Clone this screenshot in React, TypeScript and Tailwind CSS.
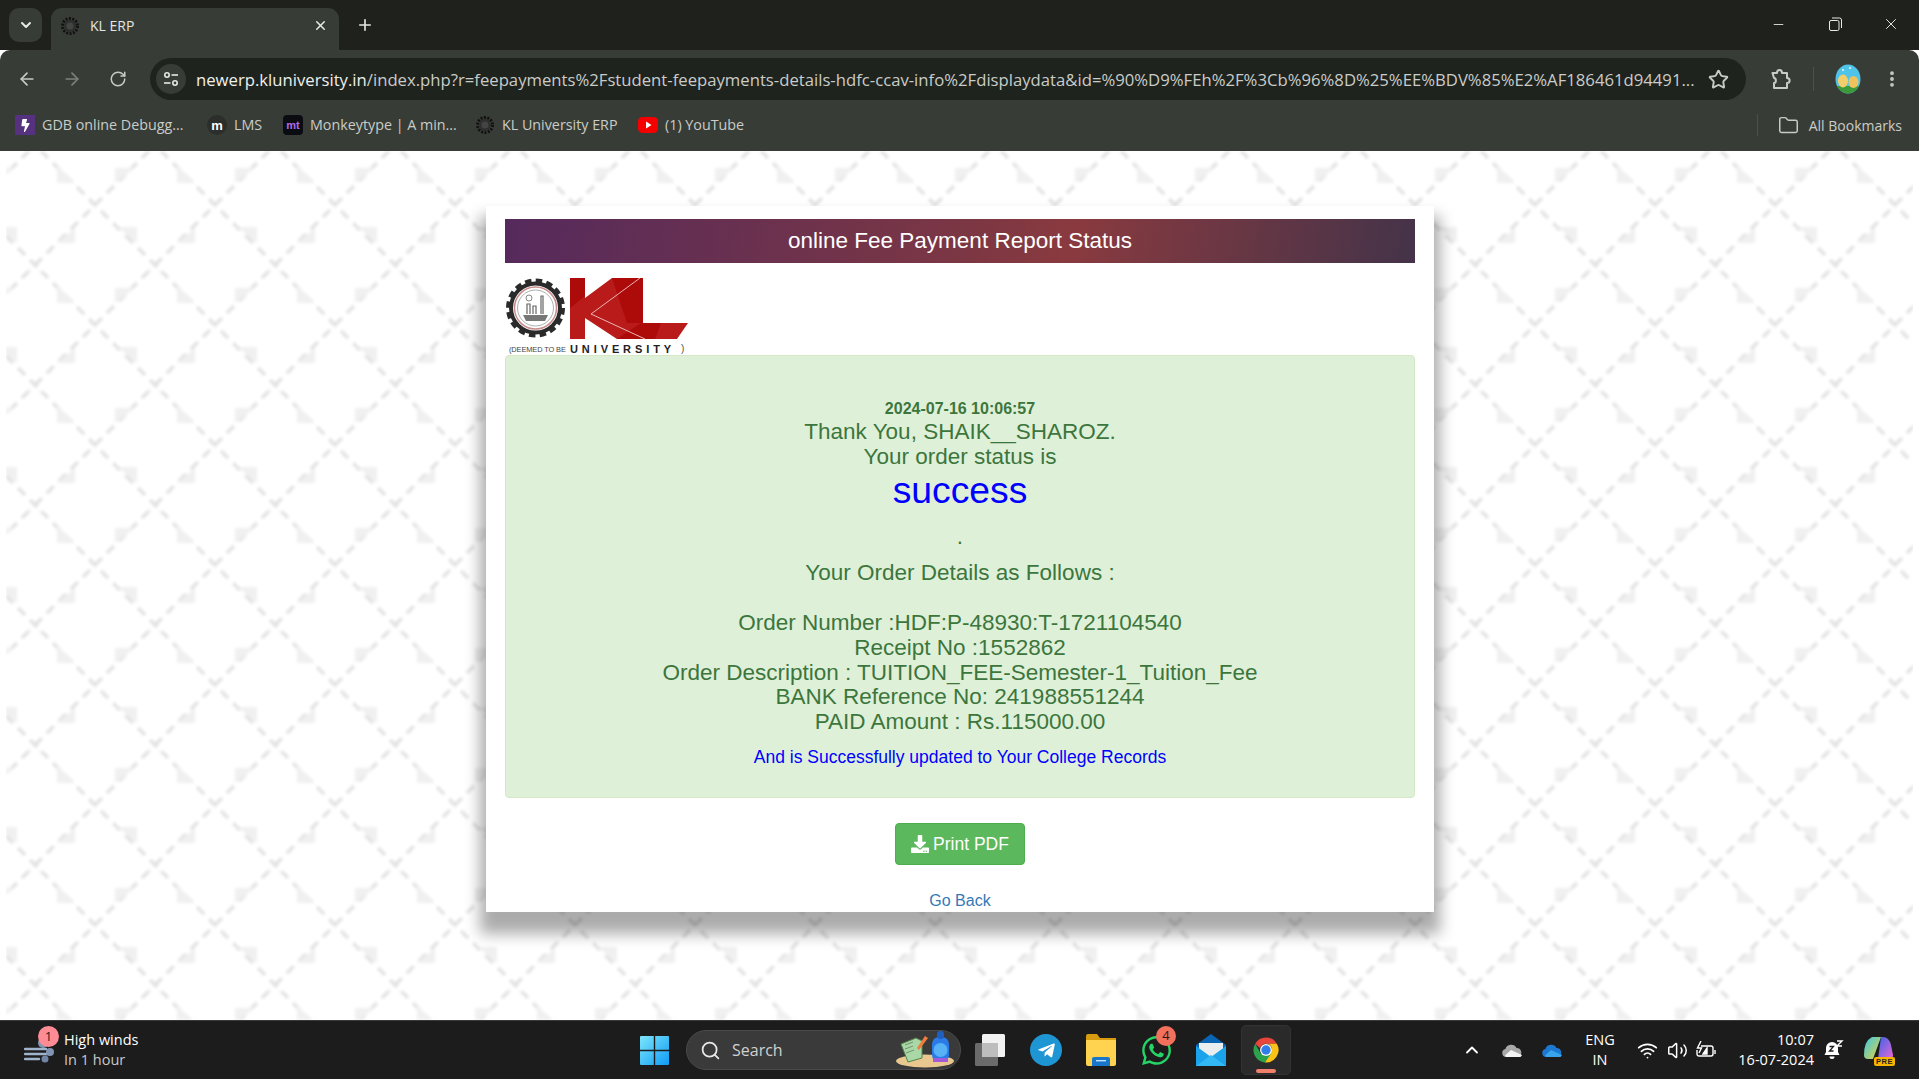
import React from "react";
import { ArrowLeft, ArrowRight, RotateCw, Star, EllipsisVertical, Folder, X, Plus, ChevronDown, Minus, Search, ChevronUp, Wifi, Volume2 } from "lucide-react";
import { FaDownload, FaTelegramPlane, FaWhatsapp, FaBolt } from "react-icons/fa";

const URL_HEAD = "newerp.kluniversity.in";
const URL_TAIL = "/index.php?r=feepayments%2Fstudent-feepayments-details-hdfc-ccav-info%2Fdisplaydata&id=%90%D9%FEh%2F%3Cb%96%8D%25%EE%BDV%85%E2%AF186461d94491...";

function GearDot({ size = 20 }: { size?: number }) {
  return (
    <svg width={size} height={size} viewBox="0 0 20 20" className="shrink-0">
      <circle cx="10" cy="10" r="7.5" fill="none" stroke="#111" strokeWidth="3" strokeDasharray="2 1.4" />
      <circle cx="10" cy="10" r="6" fill="#2c2f2b" />
      <circle cx="10" cy="10" r="3.5" fill="#444" />
    </svg>
  );
}

function Bookmark({ icon, label, gap = "ml-[7px]", width }: { icon: React.ReactNode; label: string; gap?: string; width: string }) {
  return (
    <div className={`flex items-center shrink-0 ${width}`}>
      {icon}
      <span className={`${gap} text-[14.3px] text-[#c9ccc8] whitespace-nowrap`}>{label}</span>
    </div>
  );
}

function TuneIcon() {
  return (
    <svg width="16" height="16" viewBox="0 0 16 16" fill="none" stroke="#e6e8e4" strokeWidth="1.6">
      <circle cx="4" cy="4" r="2.2" />
      <path d="M8.5 4H15" />
      <path d="M1 12h6.5" />
      <circle cx="12" cy="12" r="2.2" />
    </svg>
  );
}

function PuzzleIcon() {
  return (
    <svg width="20" height="22" viewBox="0 0 20 22" fill="none" stroke="#c7cbc5" strokeWidth="2" strokeLinejoin="round">
      <path d="M1.5 5H6c0-4 5-4 5 0h5v5c3.5 0 3.5 5 0 5v5H3v-5c2.5 0 2.5-5 0-5z" />
    </svg>
  );
}

function RestoreIcon() {
  return (
    <svg width="13" height="14" viewBox="0 0 13 14" fill="none" stroke="#e8e8e8" strokeWidth="1">
      <rect x="0.5" y="3.5" width="9.5" height="10" rx="1.5" />
      <path d="M3 1h7.5a2 2 0 0 1 2 2v8" />
    </svg>
  );
}

function Avatar() {
  return (
    <svg width="26" height="30" viewBox="0 0 26 30" className="shrink-0">
      <defs>
        <clipPath id="avatar-clip"><ellipse cx="13" cy="15" rx="12.5" ry="14.5" /></clipPath>
      </defs>
      <g clipPath="url(#avatar-clip)">
        <rect width="26" height="30" fill="#4fc3e8" />
        <rect y="22" width="26" height="8" fill="#3c9a3a" />
        <ellipse cx="8" cy="17" rx="5" ry="6.5" fill="#f3cf6c" />
        <ellipse cx="18.5" cy="18" rx="5" ry="6" fill="#eec25c" />
        <circle cx="8" cy="6" r="0.9" fill="#fff" />
        <circle cx="15" cy="4" r="0.9" fill="#fff" />
      </g>
    </svg>
  );
}

function KlLogo() {
  return (
    <svg width="185" height="77" viewBox="0 0 185 77" className="block">
      <circle cx="30.500" cy="30" r="24.500" fill="none" stroke="#2a2a2a" strokeWidth="4" />
      <circle cx="30.500" cy="30" r="27.500" fill="none" stroke="#2a2a2a" strokeWidth="4" strokeDasharray="6.5 4.300" />
      <circle cx="30.500" cy="30" r="21" fill="#fff" stroke="#c98c8c" strokeWidth="1.500" />
      <circle cx="30.500" cy="30" r="18" fill="#fff" stroke="#999" strokeWidth="0.8" />
      <path d="M18 37h25l-3 6H21z" fill="#777" />
      <path d="M22 36V26h3v10M28 36V28h3v8M36 36V18h2v18" stroke="#666" strokeWidth="1.200" fill="none" />
      <circle cx="24" cy="20" r="3" fill="none" stroke="#888" strokeWidth="1" />
      <path d="M65 0h15v20L107 0h31v45h45l-11 16h-60L80 40v21H65z" fill="#b91a1a" />
      <path d="M107 0h31v45h-16zM112 61h38l6-16h-20zM65 0h15v18L65 30z" fill="#ad0a0a" />
      <path d="M135 0L86 36l54 25" fill="none" stroke="#f2c6c6" strokeWidth="0.9" />
      <text x="4" y="73.500" fontFamily="Liberation Sans, sans-serif" fontSize="7.400" fill="#444" letterSpacing="-0.1">(DEEMED TO BE</text>
      <text x="65" y="75" fontFamily="Liberation Sans, sans-serif" fontSize="11" fontWeight="700" fill="#222" letterSpacing="3.900">UNIVERSITY</text>
      <text x="176" y="74" fontFamily="Liberation Sans, sans-serif" fontSize="10" fill="#555">)</text>
    </svg>
  );
}

function PageBackground() {
  return (
    <div className="absolute inset-y-0 left-[6px] right-[6px] overflow-hidden">
      <svg width="100%" height="100%" className="blur-[1.5px]">
        <defs>
          <pattern id="tile" x="0" y="0" width="120" height="120" patternUnits="userSpaceOnUse">
            <g stroke="#e2e2e2" strokeWidth="3.500" strokeDasharray="10 7" fill="none">
              <path d="M23 0L0 23" />
              <path d="M120 23L23 120" />
              <path d="M120 143L143 120" />
              <path d="M35 0L155 120" />
              <path d="M0 85L35 120" />
            </g>
            <g fill="#f0f0f0">
              <path d="M69 77v15H51z" />
              <path d="M112 76h19v16z" />
              <path d="M-8 76h19v16z" />
              <path d="M51 14v18h18z" />
              <path d="M109 17h20l-20 15z" />
              <path d="M-11 17H9l-20 15z" />
            </g>
          </pattern>
        </defs>
        <rect width="100%" height="100%" fill="#fff" />
        <rect width="100%" height="100%" fill="url(#tile)" />
      </svg>
    </div>
  );
}

function WindIcon() {
  return (
    <svg width="32" height="28" viewBox="0 0 32 28" fill="none" strokeLinecap="round">
      <path d="M1 13h21M1 18h24M1 23h14" stroke="#9fb3cc" strokeWidth="2.400" />
      <circle cx="19" cy="7" r="5" fill="#7f95b3" />
      <circle cx="26" cy="16" r="4" fill="#7f95b3" />
      <circle cx="21" cy="23" r="3.500" fill="#6f86a6" />
    </svg>
  );
}

function WinLogo() {
  return (
    <svg width="29" height="29" viewBox="0 0 29 29">
      <defs>
        <linearGradient id="win-g" x1="0" y1="0" x2="1" y2="1">
          <stop offset="0" stopColor="#7de6fb" />
          <stop offset="1" stopColor="#0f9bf5" />
        </linearGradient>
      </defs>
      <path d="M1 0h12.800v13.800H0V1a1 1 0 0 1 1-1zM15.200 0H28a1 1 0 0 1 1 1v12.800H15.200zM0 15.200h13.800V29H1a1 1 0 0 1-1-1zM15.200 15.200H29V28a1 1 0 0 1-1 1H15.200z" fill="url(#win-g)" />
    </svg>
  );
}

function SearchWidget() {
  return (
    <svg width="60" height="38" viewBox="0 0 60 38">
      <ellipse cx="30" cy="30" rx="29" ry="6.500" fill="#e8c88f" />
      <path d="M6 13l15-6 6 3v17l-14 4z" fill="#a9d7a6" stroke="#52854c" strokeWidth="1" />
      <path d="M10 14l8-3M10 18l8-3M11 22l8-3" stroke="#6c8a68" strokeWidth="0.9" />
      <path d="M22 17L30 5l3 2-9 12z" fill="#ef7d3f" />
      <rect x="37" y="6" width="17" height="25" rx="7" fill="#2a7be8" />
      <rect x="42" y="0" width="7" height="8" rx="3" fill="#1f5fc0" />
      <circle cx="45.500" cy="19" r="7" fill="#57b2f5" />
      <rect x="38" y="27" width="15" height="4" fill="#a15bd8" />
    </svg>
  );
}

function TaskView() {
  return (
    <svg width="30" height="32" viewBox="0 0 30 32">
      <rect x="0" y="9" width="23" height="23" rx="1.500" fill="#6b6b6b" />
      <rect x="7" y="0" width="23" height="23" rx="1.500" fill="#f2f2f2" />
      <rect x="7" y="9" width="16" height="14" fill="#bdbdbd" />
    </svg>
  );
}

function FilesIcon() {
  return (
    <svg width="30" height="32" viewBox="0 0 30 32">
      <path d="M0 2a2 2 0 0 1 2-2h9l3 4h16v6H0z" fill="#d79c10" />
      <path d="M0 6h30v24a2 2 0 0 1-2 2H2a2 2 0 0 1-2-2z" fill="#ffd350" />
      <path d="M6 32v-7a2 2 0 0 1 2-2h14a2 2 0 0 1 2 2v7z" fill="#1976c9" />
      <rect x="10" y="26" width="10" height="1.400" fill="#bde3ff" />
    </svg>
  );
}

function MailIcon() {
  return (
    <svg width="30" height="32" viewBox="0 0 30 32">
      <path d="M15 0l15 11v3H0v-3z" fill="#0a64b4" />
      <path d="M3 9h24v10L15 24 3 19z" fill="#e9edf0" />
      <path d="M0 12l15 11 15-11v20H0z" fill="#1aa2ea" />
      <path d="M0 32l15-11 15 11z" fill="#32b8f4" />
    </svg>
  );
}

function ChromeIcon() {
  return (
    <svg width="30" height="30" viewBox="0 0 48 48">
      <path d="M24 4a20 20 0 0 1 17.300 10H24a10 10 0 0 0-9.600 7.200L6.700 14A20 20 0 0 1 24 4z" fill="#e8453c" />
      <path d="M6.700 14l8.600 15A10 10 0 0 0 24 34l-8.700 8A20 20 0 0 1 6.700 14z" fill="#2ba24c" />
      <path d="M41.300 14A20 20 0 0 1 22 44l8.600-15A10 10 0 0 0 32.700 19 10 10 0 0 0 24 14z" fill="#fbc116" />
      <path d="M15.300 29L24 34l8.700-5L22 44a20 20 0 0 1-6.700-2z" fill="#2ba24c" />
      <circle cx="24" cy="24" r="9.500" fill="#fff" />
      <circle cx="24" cy="24" r="7.500" fill="#2f7ee9" />
    </svg>
  );
}

function CloudIcon({ a, b }: { a: string; b: string }) {
  return (
    <svg width="20" height="14" viewBox="0 0 20 14">
      <path d="M4 14a4 4 0 0 1-.6-7.900A6 6 0 0 1 14.500 5 4.600 4.600 0 0 1 16 14z" fill={a} />
      <path d="M4 14a4 4 0 0 1-1-1.500L9 7l11 5a3 3 0 0 1-4 2z" fill={b} />
    </svg>
  );
}

function BatteryIcon() {
  return (
    <svg width="20" height="18" viewBox="0 0 20 18" fill="none" stroke="#fff" strokeWidth="1.400">
      <path d="M5 5h10a2 2 0 0 1 2 2v6a2 2 0 0 1-2 2H3a2 2 0 0 1-2-2V9" />
      <path d="M19 9v4" />
      <path d="M5 0L1.500 7h4L3 12" />
      <path d="M7 13l4-6v6z" fill="#fff" />
    </svg>
  );
}

function BellIcon() {
  return (
    <svg width="20" height="20" viewBox="0 0 20 20">
      <path d="M8 2a6 6 0 0 0-6 6v4l-1.500 3h15L14 12V8a6 6 0 0 0-6-6z" fill="#fff" />
      <path d="M5.500 16.500a2.500 2.500 0 0 0 5 0z" fill="#fff" />
      <path d="M5.500 6.500h4l-4 4.500h4" fill="none" stroke="#1c1c1c" strokeWidth="1.300" />
      <path d="M13 1h5l-5 5h5" fill="none" stroke="#fff" strokeWidth="1.400" />
    </svg>
  );
}

function CopilotIcon() {
  return (
    <div className="relative w-[30px] h-[30px] shrink-0">
      <svg width="30" height="26" viewBox="0 0 30 26">
        <defs>
          <linearGradient id="cp-a" x1="0" y1="0" x2="1" y2="1">
            <stop offset="0" stopColor="#3bc8e8" />
            <stop offset="1" stopColor="#e6d23c" />
          </linearGradient>
          <linearGradient id="cp-b" x1="0" y1="0" x2="1" y2="1">
            <stop offset="0" stopColor="#3a62e6" />
            <stop offset="1" stopColor="#e86ad8" />
          </linearGradient>
        </defs>
        <path d="M8 2h9L9 24H4a4 4 0 0 1-4-4q0-14 8-18z" fill="url(#cp-a)" />
        <path d="M17 2h2q6 0 8 8l2 10q0 4-4 4H14z" fill="url(#cp-b)" />
      </svg>
      <span className="absolute right-[-1px] bottom-[-1px] bg-[#f7b500] text-[#222] text-[7.5px] font-bold leading-[9px] px-[2px] rounded-[2px] tracking-[0.5px] font-['Liberation_Sans',sans-serif]">PRE</span>
    </div>
  );
}

export default function App() {
  return (
    <div className="w-[1919px] h-[1079px] overflow-hidden flex flex-col bg-white font-['Open_Sans','Noto_Sans',sans-serif]">
      {/* Tab strip */}
      <div className="h-[50px] shrink-0 bg-[#1e211c] flex items-end">
        <div className="ml-[9px] mb-[8px] w-[33px] h-[34px] rounded-[10px] bg-[#383c36] flex items-center justify-center">
          <ChevronDown size={16} color="#e8e8e8" strokeWidth={3} />
        </div>
        <div className="ml-[9px] w-[288px] h-[42px] rounded-t-[11px] bg-[#383c36] flex items-center pl-[9px] pr-[11px] pb-[7px]">
          <GearDot size={20} />
          <span className="ml-[10px] text-[14px] text-[#e4e6e2] leading-none">KL ERP</span>
          <X size={15} color="#e8e8e8" strokeWidth={2.4} className="ml-auto" />
        </div>
        <div className="ml-[17px] mb-[8px] h-[34px] flex items-center">
          <Plus size={18} color="#e4e6e2" strokeWidth={2.2} />
        </div>
        <div className="ml-auto h-full flex items-center pb-[2px]">
          <div className="w-[56px] flex justify-center mr-[1px]"><Minus size={15} color="#e8e8e8" strokeWidth={1.4} /></div>
          <div className="w-[56px] flex justify-center"><RestoreIcon /></div>
          <div className="w-[56px] flex justify-center"><X size={18} color="#e8e8e8" strokeWidth={1.3} /></div>
        </div>
      </div>

      {/* Toolbar */}
      <div className="h-[58px] shrink-0 bg-[#383c36] rounded-t-[10px] flex items-center">
        <div className="ml-[17px] w-[20px] flex justify-center"><ArrowLeft size={20} color="#c7cbc5" strokeWidth={2} /></div>
        <div className="ml-[25px] w-[20px] flex justify-center"><ArrowRight size={20} color="#7d817b" strokeWidth={2} /></div>
        <div className="ml-[26px] w-[20px] flex justify-center"><RotateCw size={18} color="#c7cbc5" strokeWidth={2} /></div>
        <div className="ml-[22px] w-[1596px] h-[42px] rounded-full bg-[#1f231e] flex items-center">
          <div className="ml-[6px] w-[30px] h-[30px] rounded-full bg-[#383c36] flex items-center justify-center shrink-0"><TuneIcon /></div>
          <div className="ml-[10px] mt-[1px] shrink-0 whitespace-nowrap text-[16.7px] text-[#c9ccc8]">
            <span className="text-[#eef0ec]">{URL_HEAD}</span>{URL_TAIL}
          </div>
          <Star size={21} color="#c7cbc5" strokeWidth={2.2} className="ml-auto mr-[17px]" />
        </div>
        <div className="ml-[25px] w-[20px] flex justify-center"><PuzzleIcon /></div>
        <div className="ml-[22px] w-[1px] h-[24px] bg-[#4d514b]" />
        <div className="ml-[21px]"><Avatar /></div>
        <div className="ml-[21px]"><EllipsisVertical size={20} color="#c7cbc5" strokeWidth={2.6} /></div>
      </div>

      {/* Bookmarks */}
      <div className="h-[43px] shrink-0 bg-[#383c36] flex items-center pb-[9px] pl-[15px]">
        <Bookmark
          width="w-[192px]"
          icon={<div className="w-[20px] h-[20px] bg-[#55317f] flex items-center justify-center"><FaBolt size={13} color="#fff" /></div>}
          label="GDB online Debugg..."
        />
        <Bookmark
          width="w-[76px]"
          icon={<div className="w-[20px] h-[20px] rounded-full bg-[#2b2e2a] flex items-center justify-center text-white text-[13px] font-bold leading-none font-['Liberation_Sans',sans-serif]">m</div>}
          label="LMS"
        />
        <Bookmark
          width="w-[192px]"
          icon={<div className="w-[20px] h-[20px] rounded-[4px] bg-[#0b0b12] flex items-center justify-center text-[#b06ae8] text-[11px] font-bold leading-none font-['Liberation_Sans',sans-serif]">mt</div>}
          label="Monkeytype | A min..."
        />
        <Bookmark width="w-[163px]" icon={<GearDot size={20} />} label="KL University ERP" />
        <Bookmark
          width="w-[110px]"
          icon={
            <svg width="20" height="20" viewBox="0 0 20 20">
              <rect x="0" y="2" width="20" height="16" rx="4.500" fill="#f40000" />
              <path d="M8 6.500v7l5.500-3.500z" fill="#fff" />
            </svg>
          }
          label="(1) YouTube"
        />
        <div className="ml-auto flex items-center pr-[17px]">
          <div className="w-[1px] h-[22px] bg-[#4d514b]" />
          <Folder size={21} color="#c7cbc5" strokeWidth={1.7} className="ml-[20px]" />
          <span className="ml-[10px] text-[14px] text-[#c9ccc8] whitespace-nowrap">All Bookmarks</span>
        </div>
      </div>

      {/* Page */}
      <main className="relative flex-1 min-h-0 overflow-hidden bg-white font-['Liberation_Sans',sans-serif]">
        <PageBackground />
        <div className="relative mt-[55px] ml-[486px] w-[948px] h-[706px] bg-white shadow-[0_16px_14px_6px_rgba(0,0,0,0.33)] px-[19px] pt-[13px] overflow-hidden">
          <div className="h-[44px] bg-[linear-gradient(100deg,#552a5c_0%,#7d3743_52%,#8a3a3f_62%,#443349_100%)] text-white text-[22.5px] flex items-center justify-center">
            online Fee Payment Report Status
          </div>
          <div className="mt-[15px] h-[77px]"><KlLogo /></div>
          <div className="h-[443px] bg-[#dff0d8] border border-[#d6e9c6] rounded-[4px] text-[#3c763d] flex flex-col items-center text-center pt-[42px]">
            <div className="text-[16px] font-bold leading-[21px]">2024-07-16 10:06:57</div>
            <div className="mt-[1px] text-[22.5px] leading-[24.75px]">Thank You, SHAIK__SHAROZ.</div>
            <div className="text-[22.5px] leading-[24.75px]">Your order status is</div>
            <div className="mt-[0.5px] text-[37.3px] leading-[40px] text-[#0000ff]">success</div>
            <div className="mt-[14.5px] text-[22.5px] leading-[24.75px]">.</div>
            <div className="mt-[12px] text-[22.5px] leading-[24.75px]">Your Order Details as Follows :</div>
            <div className="mt-[25px] text-[22.5px] leading-[24.75px]">Order Number :HDF:P-48930:T-1721104540</div>
            <div className="text-[22.5px] leading-[24.75px]">Receipt No :1552862</div>
            <div className="text-[22.5px] leading-[24.75px]">Order Description : TUITION_FEE-Semester-1_Tuition_Fee</div>
            <div className="text-[22.5px] leading-[24.75px]">BANK Reference No: 241988551244</div>
            <div className="text-[22.5px] leading-[24.75px]">PAID Amount : Rs.115000.00</div>
            <div className="mt-[12px] text-[17.5px] leading-[20px] text-[#0000ff]">And is Successfully updated to Your College Records</div>
          </div>
          <div className="mt-[25px] flex justify-center">
            <div className="w-[130px] h-[42px] rounded-[4px] bg-[#5cb85c] border border-[#4cae4c] text-white text-[17.5px] flex items-center justify-center gap-[4px]">
              <FaDownload size={18} />
              <span>Print PDF</span>
            </div>
          </div>
          <div className="mt-[26px] text-center text-[16px] leading-[20px] text-[#337ab7]">Go Back</div>
        </div>
      </main>

      {/* Taskbar */}
      <div className="h-[59px] shrink-0 bg-[#1c1c1c] border-t border-[#3a3a3a] flex items-center text-white">
        <div className="relative ml-[24px] w-[32px] h-[28px] shrink-0">
          <WindIcon />
          <div className="absolute left-[14px] top-[-10px] w-[21px] h-[21px] rounded-full bg-[#ff8b94] text-[#1c1c1c] text-[13px] flex items-center justify-center">1</div>
        </div>
        <div className="ml-[8px] mb-[1px] w-[110px] flex flex-col leading-[20px] text-[14.5px]">
          <span className="text-white">High winds</span>
          <span className="text-[#c8c8c8]">In 1 hour</span>
        </div>
        <div className="ml-[466px]"><WinLogo /></div>
        <div className="ml-[17px] w-[275px] h-[40px] rounded-full bg-[#3a3a3a] border border-[#4a4a4a] flex items-center">
          <Search size={21} color="#e8e8e8" strokeWidth={2} className="ml-[13px]" />
          <span className="ml-[11px] text-[16px] text-[#d0d0d0]">Search</span>
          <div className="ml-auto mr-[5px]"><SearchWidget /></div>
        </div>
        <div className="ml-[14px]"><TaskView /></div>
        <div className="ml-[25px] w-[32px] h-[32px] rounded-full bg-[#1e96d4] flex items-center justify-center"><FaTelegramPlane size={19} color="#fff" /></div>
        <div className="ml-[24px]"><FilesIcon /></div>
        <div className="relative ml-[24px] w-[32px] h-[32px]">
          <FaWhatsapp size={33} color="#25d366" />
          <div className="absolute left-[16px] top-[-8px] w-[20px] h-[20px] rounded-full bg-[#f2705c] text-[#1c1c1c] text-[13px] flex items-center justify-center">4</div>
        </div>
        <div className="ml-[24px]"><MailIcon /></div>
        <div className="relative ml-[15px] w-[50px] h-[50px] rounded-[5px] bg-[#2a2a2a] border border-[#333] flex items-center justify-center">
          <ChromeIcon />
          <div className="absolute left-[14px] bottom-[1px] w-[20px] h-[4px] rounded-full bg-[#f0806a]" />
        </div>
        <div className="ml-[171px]"><ChevronUp size={20} color="#fff" strokeWidth={2.2} /></div>
        <div className="ml-[20px]"><CloudIcon a="#a8a8a8" b="#f4f4f4" /></div>
        <div className="ml-[20px]"><CloudIcon a="#1c78d0" b="#37a4ec" /></div>
        <div className="ml-[10px] w-[56px] flex flex-col items-center text-[14.5px] leading-[20px]">
          <span>ENG</span>
          <span>IN</span>
        </div>
        <div className="ml-[9px]"><Wifi size={21} color="#fff" strokeWidth={2} /></div>
        <div className="ml-[9px]"><Volume2 size={21} color="#fff" strokeWidth={1.7} /></div>
        <div className="ml-[8px]"><BatteryIcon /></div>
        <div className="ml-[8px] w-[90px] flex flex-col items-end text-[14.5px] leading-[20px]">
          <span>10:07</span>
          <span>16-07-2024</span>
        </div>
        <div className="ml-[10px]"><BellIcon /></div>
        <div className="ml-[20px]"><CopilotIcon /></div>
      </div>
    </div>
  );
}
